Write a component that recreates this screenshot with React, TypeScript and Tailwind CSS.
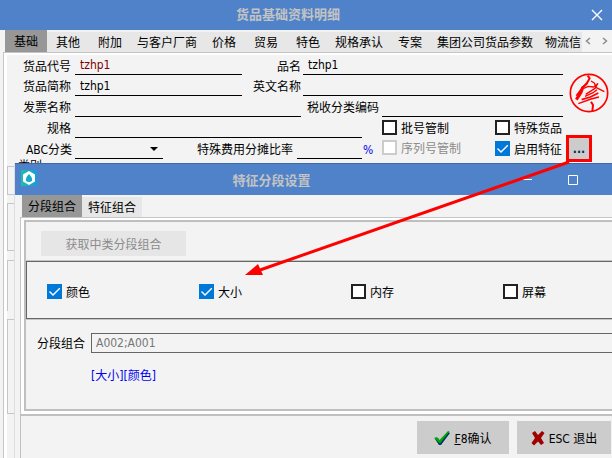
import type { ReactNode } from "react";

const field =
  "h-[20px] min-w-0 border-0 border-b border-black bg-transparent px-[5px] pt-px outline-none";

function Check({ label, on = false, disabled = false }: { label: string; on?: boolean; disabled?: boolean }) {
  return (
    <label className={`flex items-center gap-1 whitespace-nowrap ${disabled ? "text-[#8c8c8c]" : ""}`}>
      <span className="relative block h-[15px] w-[15px]">
        <input
          type="checkbox"
          defaultChecked={on}
          disabled={disabled}
          className="peer block h-[15px] w-[15px] appearance-none border-2 border-[#222] bg-white checked:border-[#0078d7] checked:bg-[#0078d7] disabled:border-[#ccc]"
        />
        <svg viewBox="0 0 15 15" className="pointer-events-none absolute inset-0 hidden h-[15px] w-[15px] peer-checked:block">
          <path d="M2.5 7.5 L6 11 L12.8 4.2" fill="none" stroke="#fff" strokeWidth="1.4" />
        </svg>
      </span>
      <span className="pt-[3px]">{label}</span>
    </label>
  );
}

function Label({ id, className, children }: { id: string; className: string; children: ReactNode }) {
  return (
    <label htmlFor={id} className={`shrink-0 whitespace-nowrap pt-[3px] text-right ${className}`}>
      {children}
    </label>
  );
}

function Tabs({ items }: { items: string[] }) {
  return (
    <div role="tablist" className="flex h-[22px] items-end overflow-hidden">
      {items.map((t, i) => (
        <button
          key={t}
          role="tab"
          aria-selected={i === 0}
          className={`min-w-[42px] shrink-0 px-1.5 pt-px ${i === 0 ? "h-[22px] bg-[#979797]" : "h-[20px] bg-[#e7e7e7]"}`}
        >
          {t}
        </button>
      ))}
    </div>
  );
}

function Seal() {
  return (
    <svg viewBox="0 0 120 120" className="ml-[3px] h-[40px] w-[40px]" fill="none" stroke="#f00" strokeLinejoin="round">
      <circle cx="60" cy="60" r="56" strokeWidth="5" />
      <path d="M56 8 L62 16 L52 34 L38 46" strokeWidth="6" />
      <path d="M56 28 L40 44 L22 68" strokeWidth="5" />
      <path d="M42 42 L36 58 L22 80" strokeWidth="9" />
      <path d="M44 46 L58 40 L74 42 L86 32 L78 46 L50 64" strokeWidth="4" />
      <path d="M66 24 L76 30 L82 44 L106 56" strokeWidth="4" />
      <path d="M84 50 L74 58 L48 70" strokeWidth="4" />
      <path d="M88 60 L64 72 L38 80" strokeWidth="5" />
      <path d="M90 72 L66 78 L28 92" strokeWidth="4" />
      <path d="M66 86 L72 96 L70 116" strokeWidth="6" />
    </svg>
  );
}

function Dialog() {
  return (
    <section
      aria-label="特征分段设置"
      className="absolute bottom-0 left-[14px] right-0 top-[163px] flex flex-col overflow-hidden border-l border-[#dedede] bg-[#f3f3f3]"
    >
      <header className="flex h-[32px] shrink-0 items-center border-t border-[#3e68a6] bg-[#5082c9] pl-[6px] text-white">
        <svg viewBox="0 0 16 16" className="mb-1 h-[16px] w-[16px] shrink-0">
          <defs>
            <linearGradient id="logo">
              <stop offset="0" stopColor="#20bdb0" />
              <stop offset="1" stopColor="#159bdc" />
            </linearGradient>
          </defs>
          <rect width="16" height="16" fill="url(#logo)" />
          <path d="M8 1 L14 4.500 V11.500 L8 15 L2 11.500 V4.500 Z" fill="#fff" />
          <path d="M8 4 Q12 8 11 11 Q8 13 5 11 Q4 8 8 4 Z" fill="#18abc5" />
        </svg>
        <h2 className="flex-1 pl-[2px] pt-[2px] text-center text-[13px] font-bold text-[#c3c3c3]">特征分段设置</h2>
        <button aria-label="最小化" className="flex w-[46px] justify-center">
          <svg viewBox="0 0 10 10" className="h-[10px] w-[10px]"><path d="M0 4.500 H10" stroke="#fff" /></svg>
        </button>
        <button aria-label="最大化" className="mr-4 flex w-[46px] justify-center">
          <svg viewBox="0 0 10 10" className="h-[10px] w-[10px]"><path d="M.5 .5 H9.500 V9.500 H.5 Z" fill="none" stroke="#fff" /></svg>
        </button>
      </header>
      <div className="pl-[7px]">
        <Tabs items={["分段组合", "特征组合"]} />
      </div>
      <div className="ml-[5px] border-l border-t border-[#c6c6c6] bg-white pb-[3px] pl-[3px] pt-[2px]">
        <div className="border-2 border-r-0 border-[#bfbfbf] bg-[#f3f3f3]">
          <div className="px-[15px] pb-[4px] pt-[9px]">
            <button disabled className="h-[25px] w-[145px] bg-[#e6e6e6] pt-[3px] text-[#8c8c8c]">获取中类分段组合</button>
          </div>
          <div className="border-y border-[#c6c6c6]">
            <div className="flex h-[58px] items-center border-y border-l border-[#666] pl-[20px] pt-[3px]">
              <div className="w-[152px]"><Check label="颜色" on /></div>
              <div className="w-[152px]"><Check label="大小" on /></div>
              <div className="w-[152px]"><Check label="内存" /></div>
              <Check label="屏幕" />
            </div>
          </div>
          <div className="flex items-center pl-[11px] pt-[12px]">
            <Label id="combo" className="mr-[6px] w-[48px]">分段组合</Label>
            <input
              id="combo"
              readOnly
              defaultValue="A002;A001"
              className="h-[20px] min-w-0 flex-1 border border-r-0 border-[#666] bg-transparent px-[4px] text-[#777] outline-none"
            />
          </div>
          <p className="pb-[23px] pl-[65px] pt-[13px] leading-[20px] text-[#0000f0]">[大小][颜色]</p>
        </div>
      </div>
      <footer className="ml-[5px] flex flex-1 items-start justify-end gap-2 border-l border-t-2 border-[#c0c0c0] pr-px pt-[5px]">
        <button className="flex h-[33px] w-[92px] items-center justify-center gap-1 bg-[#ccc]">
          <svg viewBox="0 0 16 16" className="h-[16px] w-[16px]">
            <path d="M1 9 L4 8 L6 11 L14 2 L16 3 L7 15 L5 15 Z" fill="#00306c" />
            <path d="M0 8 L3 7 L5.500 10 L14 1 L15.500 1.500 L6 13.500 Z" fill="#00a800" />
          </svg>
          <span className="pt-[3px]"><u>F</u>8确认</span>
        </button>
        <button className="flex h-[33px] w-[94px] items-center justify-center gap-1 bg-[#ccc]">
          <svg viewBox="0 0 14 16" className="h-[16px] w-[14px]">
            <path d="M1 3 L4 1 L7 5 L11 1 L13.500 3 L10 8 L13 13 L10 15 L7 11.500 L3 15.500 L.5 13 L4 8 Z" fill="#a00000" />
          </svg>
          <span className="pt-[3px]">ESC 退出</span>
        </button>
      </footer>
    </section>
  );
}

export default function App() {
  return (
    <main className="relative flex h-screen flex-col overflow-hidden bg-[#f3f3f3] font-['DejaVu_Sans_Condensed','Noto_Sans_CJK_SC',sans-serif] text-[12px] leading-[18px] text-black">
      <header className="flex h-[30px] shrink-0 items-center bg-[#5082c9]">
        <h1 className="flex-1 pr-[6px] text-center text-[13px] font-bold text-[#c3c3c3]">货品基础资料明细</h1>
        <button aria-label="关闭" className="flex w-[30px] justify-center">
          <svg viewBox="0 0 12 12" className="h-[12px] w-[12px]"><path d="M1 1 L11 11 M11 1 L1 11" stroke="#fff" strokeWidth="1.4" /></svg>
        </button>
      </header>
      <div className="flex shrink-0 pl-[5px]">
        <div className="min-w-0 flex-1">
          <Tabs items={["基础", "其他", "附加", "与客户厂商", "价格", "贸易", "特色", "规格承认", "专案", "集团公司货品参数", "物流信"]} />
        </div>
        <div className="flex w-[30px] shrink-0 items-center justify-between pl-[3px] pr-[4px] text-[#8c8c8c]">
          <button aria-label="向左"><svg viewBox="0 0 6 8" className="h-[8px] w-[6px]"><path d="M5 1 L1.500 4 L5 7" fill="none" stroke="currentColor" strokeWidth="1.5" /></svg></button>
          <button aria-label="向右"><svg viewBox="0 0 6 8" className="h-[8px] w-[6px]"><path d="M1 1 L4.500 4 L1 7" fill="none" stroke="currentColor" strokeWidth="1.5" /></svg></button>
        </div>
      </div>
      <div className="ml-[3px] flex-1 border-l border-t border-[#c6c6c6] bg-white pl-[3px] pt-[2px]">
        <div className="h-full bg-[#f3f3f3]">
          <div className="flex">
            <form className="min-w-0 flex-1">
              <div className="flex h-[20px] items-center">
                <Label id="code" className="w-[64px]">货品代号</Label>
                <input id="code" defaultValue="tzhp1" className={`${field} ml-1 w-[167px] text-[#800000]`} />
                <Label id="name" className="mr-[2px] w-[59px]">品名</Label>
                <input id="name" defaultValue="tzhp1" className={`${field} flex-1`} />
              </div>
              <div className="flex h-[21px] items-center">
                <Label id="short" className="w-[64px]">货品简称</Label>
                <input id="short" defaultValue="tzhp1" className={`${field} ml-1 w-[167px]`} />
                <Label id="eng" className="mr-[2px] w-[59px]">英文名称</Label>
                <input id="eng" className={`${field} flex-1`} />
              </div>
              <div className="flex h-[21px] items-center">
                <Label id="invoice" className="w-[64px]">发票名称</Label>
                <input id="invoice" className={`${field} ml-1 w-[226px]`} />
                <Label id="tax" className="mr-[3px] w-[78px]">税收分类编码</Label>
                <input id="tax" className={`${field} flex-1`} />
              </div>
              <div className="flex h-[21px] items-center">
                <Label id="spec" className="w-[64px]">规格</Label>
                <input id="spec" className={`${field} ml-1 mr-[20px] flex-1`} />
                <div className="w-[113px]"><Check label="批号管制" /></div>
                <div className="w-[68px]"><Check label="特殊货品" /></div>
              </div>
              <div className="flex h-[21px] items-center">
                <Label id="abc" className="w-[65px]">ABC分类</Label>
                <span className="relative ml-[3px] block w-[88px]">
                  <select id="abc" className={`${field} block w-full appearance-none`}><option></option></select>
                  <svg viewBox="0 0 8 4" className="pointer-events-none absolute right-[5px] top-[8px] h-[4px] w-[8px]"><path d="M0 0 H8 L4 4 Z" /></svg>
                </span>
                <Label id="rate" className="mr-1 w-[130px]">特殊费用分摊比率</Label>
                <input id="rate" className={`${field} flex-1`} />
                <span className="w-[20px] pl-px pt-[3px] text-[#0000f0]">%</span>
                <div className="w-[113px] pb-[2px]"><Check label="序列号管制" disabled /></div>
                <div className="w-[68px]"><Check label="启用特征" on /></div>
              </div>
            </form>
            <div className="w-[49px] shrink-0 pl-[3px] pt-[18px]">
              <Seal />
              <button aria-label="特征设置" className="mt-[22px] flex h-[27px] w-[26px] items-center justify-center border-3 border-[#f00] bg-[#ccc] font-bold text-[#0a2a4a]">...</button>
            </div>
          </div>
          <fieldset className="-mt-[4px] h-[37px] border border-[#c6c6c6] pl-[10px]">
            <legend className="leading-[16px]">类别</legend>
          </fieldset>
          <div className="mt-[8px] h-[48px] border border-[#c6c6c6]" />
          <div className="mt-[9px] h-[51px] border border-b-0 border-[#c6c6c6]" />
          <div className="mt-[8px] h-[95px] border border-[#c6c6c6]" />
        </div>
      </div>
      <Dialog />
      <svg viewBox="0 0 612 458" className="pointer-events-none absolute left-0 top-0 h-[458px] w-[612px]" fill="#f00">
        <path d="M569 162 L260 270" stroke="#f00" strokeWidth="3" />
        <path d="M245 275 L258 264 L263 275 Z" />
      </svg>
    </main>
  );
}
